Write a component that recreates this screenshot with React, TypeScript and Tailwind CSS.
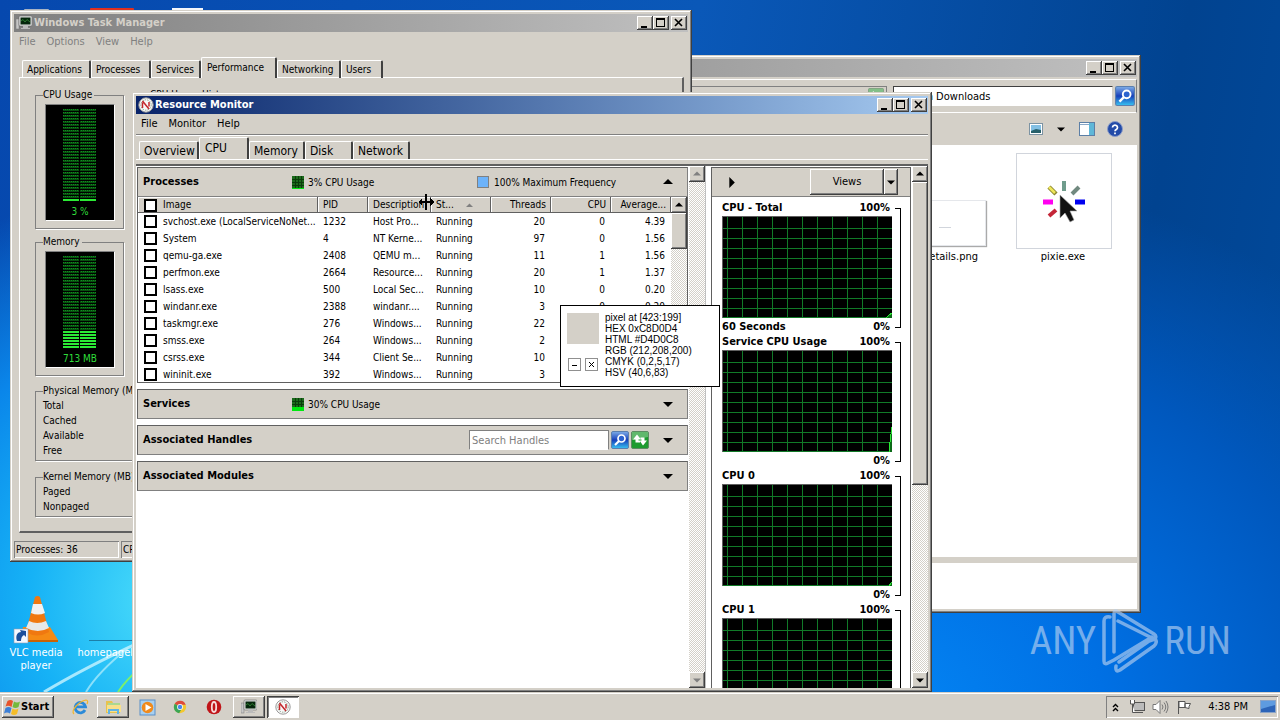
import React from "react";

const raised =
    "bg-[#d4d0c8] shadow-[inset_-1px_-1px_#404040,inset_1px_1px_#fff,inset_-2px_-2px_#808080]";
const windowFrame =
    "bg-[#d4d0c8] shadow-[inset_-1px_-1px_#404040,inset_1px_1px_#d4d0c8,inset_-2px_-2px_#808080,inset_2px_2px_#fff]";
const hatch =
    "bg-[repeating-conic-gradient(#fff_0_25%,#d4d0c8_0_50%)] bg-[length:2px_2px]";

const processes = [
    ["svchost.exe (LocalServiceNoNet...", "1232", "Host Pro...", "20", "0", "4.39"],
    ["System", "4", "NT Kerne...", "97", "0", "1.56"],
    ["qemu-ga.exe", "2408", "QEMU m...", "11", "1", "1.56"],
    ["perfmon.exe", "2664", "Resource...", "20", "1", "1.37"],
    ["lsass.exe", "500", "Local Sec...", "10", "0", "0.20"],
    ["windanr.exe", "2388", "windanr....", "3", "0", "0.20"],
    ["taskmgr.exe", "276", "Windows...", "22"],
    ["smss.exe", "264", "Windows...", "2"],
    ["csrss.exe", "344", "Client Se...", "10"],
    ["wininit.exe", "392", "Windows...", "3"],
];

type Direction = "up" | "down" | "right";

const Arrow: React.FC<{ dir: Direction; size?: number; color?: string }> = ({
    dir,
    size = 9,
    color = "#000",
}) => {
    const paths = {
        up: "M5 2L10 7H0z",
        down: "M0 3H10L5 8z",
        right: "M3 0V10L8 5z",
    };
    return (
        <svg width={size} height={size} viewBox="0 0 10 10">
            <path d={paths[dir]} fill={color} />
        </svg>
    );
};

const CaptionButtons: React.FC = () => (
    <div className="flex ml-auto mr-px">
        <button aria-label="Minimize" className={`w-4 h-3.5 ${raised}`}>
            <svg width="16" height="14">
                <rect x="4" y="10" width="6" height="2" />
            </svg>
        </button>
        <button aria-label="Maximize" className={`w-4 h-3.5 ${raised}`}>
            <svg width="16" height="14" shapeRendering="crispEdges">
                <path d="M3 2h9v9H3zM4 4v6h7V4z" fillRule="evenodd" />
            </svg>
        </button>
        <button aria-label="Close" className={`w-4 h-3.5 ml-0.5 ${raised}`}>
            <svg width="16" height="14">
                <path d="M4 3l7 7M11 3l-7 7" stroke="#000" strokeWidth="1.6" />
            </svg>
        </button>
    </div>
);

const MonitorIcon: React.FC = () => (
    <svg width="16" height="16" viewBox="0 0 16 16">
        <rect x="0" y="4" width="3" height="10" fill="#c8c8c8" stroke="#777" strokeWidth=".5" />
        <rect x="3" y="1" width="13" height="10" rx="1" fill="#e4e4e4" stroke="#666" strokeWidth=".6" />
        <rect x="4.500" y="2.500" width="10" height="7" fill="#05260c" />
        <path d="M5 6l2-1.500 2 2.500 2-2.500 3 2.500" fill="none" stroke="#2c7a30" />
        <path d="M7 11h5v2h2v1H5v-1h2z" fill="#bbb" />
    </svg>
);

const GaugeIcon: React.FC = () => (
    <svg width="16" height="16" viewBox="0 0 16 16">
        <circle cx="8" cy="8" r="7.2" fill="#f8f8f8" stroke="#999" />
        <circle cx="8" cy="8" r="5.2" fill="none" stroke="#8ba38e" strokeDasharray="1.5 1" />
        <path d="M4.500 11V5.500M4.500 4l6.500 8M11 5v4.500" stroke="#c3272b" strokeWidth="1.500" />
    </svg>
);

const Magnifier: React.FC = () => (
    <svg width="100%" height="100%" viewBox="0 0 18 18">
        <defs>
            <linearGradient id="lens" x2="0" y2="1">
                <stop offset="0" stopColor="#7faee8" />
                <stop offset=".5" stopColor="#173fba" />
                <stop offset="1" stopColor="#38c3f2" />
            </linearGradient>
        </defs>
        <rect x=".5" y=".5" width="17" height="17" rx="1.5" fill="url(#lens)" stroke="#5b7fae" />
        <circle cx="10.500" cy="7.500" r="3.500" fill="#2c63cf" stroke="#fff" strokeWidth="1.700" />
        <path d="M8 10l-4 4" stroke="#fff" strokeWidth="2.200" />
    </svg>
);

const RefreshIcon: React.FC = () => (
    <svg width="100%" height="100%" viewBox="0 0 18 18">
        <rect x=".5" y=".5" width="17" height="17" rx="1.5" fill="#1d9b2f" stroke="#5d8c63" />
        <path d="M1 1h16v5L1 9z" fill="#fff" opacity=".3" />
        <path d="M6 3.500L2 8.500H4.500V11.500H9V9.500H7.500V8.500H10zM12 14.500l4-5H13.500V6.500H9.500V8.500H10.500V9.500H8.500z" fill="#fff" />
    </svg>
);

const TabStrip: React.FC<{
    tabs: { name: string; width: string }[];
    active: string;
    className: string;
}> = ({ tabs, active, className }) => (
    <div role="tablist" className={`flex items-end ${className}`}>
        {tabs.map((tab) => (
            <button
                key={tab.name}
                role="tab"
                aria-selected={tab.name === active}
                className={`${tab.width} text-left border-l border-t border-l-white border-t-white border-r-[#404040] whitespace-nowrap rounded-t-xs ${
                    tab.name === active
                        ? "h-full pl-[5px] pb-0.5 border-r-2 relative bg-[#d4d0c8]"
                        : "h-[18px] pl-1 border-r-2"
                }`}
            >
                {tab.name}
            </button>
        ))}
    </div>
);

const Meter: React.FC<{ level: number; label: string }> = ({ level, label }) => (
    <div className="w-[70px] h-[117px] bg-black border border-t-[#808080] border-l-[#808080] border-r-white border-b-white flex flex-col items-center text-[#2fdc3a] text-[10px] leading-4">
        <svg width="34" height="95" className="mt-1" shapeRendering="crispEdges">
            <defs>
                <pattern id="leds" width="2" height="3" patternUnits="userSpaceOnUse">
                    <rect width="2" height="2" fill="#06500e" />
                    <rect width="1" height="1" fill="#128a20" />
                </pattern>
            </defs>
            <rect width="33" height="91" fill="url(#leds)" />
            {Array.from({ length: level }, (_, i) => (
                <rect key={i} y={90 - i * 3} width="33" height="2" fill="#2bea35" />
            ))}
            <rect x="16" width="1" height="95" fill="#000" />
        </svg>
        {label}
    </div>
);

const Group: React.FC<{
    title?: string;
    className: string;
    children?: React.ReactNode;
}> = ({ title, className, children }) => (
    <fieldset
        className={`border border-[#808080] shadow-[1px_1px_#fff] pl-[7px] leading-[15px] ${className}`}
    >
        {title && <legend className="leading-[14px] pr-0.5 whitespace-nowrap">{title}</legend>}
        {children}
    </fieldset>
);

const TaskManager: React.FC = () => (
    <section
        className={`absolute left-[10px] top-[10px] w-[682px] h-[552px] p-1 flex flex-col text-[10px] ${windowFrame}`}
    >
        <div className="h-[18px] shrink-0 flex items-center pl-0.5 gap-0.5 bg-linear-to-r from-[#808080] to-[#c0c0c0]">
            <MonitorIcon />
            <h2 className="font-bold text-[11px] text-[#d4d0c8]">Windows Task Manager</h2>
            <CaptionButtons />
        </div>
        <nav className="h-5 shrink-0 flex items-center gap-[11px] pl-[5px] text-[11px] text-[#808080]">
            <button>File</button>
            <button>Options</button>
            <button>View</button>
            <button>Help</button>
        </nav>
        <TabStrip
            className="h-[21px] mt-[5px] -mb-px ml-2 text-[10px] z-10"
            active="Performance"
            tabs={[
                { name: "Applications", width: "w-[69px]" },
                { name: "Processes", width: "w-[60px]" },
                { name: "Services", width: "w-[50px]" },
                { name: "Performance", width: "w-[76px]" },
                { name: "Networking", width: "w-[64px]" },
                { name: "Users", width: "w-[42px]" },
            ]}
        />
        <div className="flex-1 ml-[5px] mr-1 mb-2 pt-2.5 pl-[15px] pr-4 border-t border-l border-white border-r-2 border-b-2 border-r-[#606060] border-b-[#606060]">
            <div className="flex gap-[18px]">
                <Group title="CPU Usage" className="w-[89px] h-[141px]">
                    <div className="pl-0.5 pt-0.5">
                        <Meter level={1} label="3 %" />
                    </div>
                </Group>
                <Group title="CPU Usage History" className="flex-1 h-[141px]" />
            </div>
            <div className="flex gap-[18px] mt-1.5">
                <Group title="Memory" className="w-[89px] h-[141px]">
                    <div className="pl-0.5 pt-0.5">
                        <Meter level={6} label="713 MB" />
                    </div>
                </Group>
                <Group className="flex-1 mt-[7px]" />
            </div>
            <Group title="Physical Memory (MB)" className="w-[200px] h-[77px] mt-2">
                <p>Total</p>
                <p>Cached</p>
                <p>Available</p>
                <p>Free</p>
            </Group>
            <Group title="Kernel Memory (MB)" className="w-[200px] h-[47px] mt-[9px]">
                <p>Paged</p>
                <p>Nonpaged</p>
            </Group>
        </div>
        <footer className="h-[17px] shrink-0 flex gap-0.5 leading-[18px]">
            <p className="w-[105px] pl-0.5 shadow-[inset_1px_1px_#808080,inset_-1px_-1px_#fff]">
                Processes: 36
            </p>
            <p className="w-[120px] pl-0.5 shadow-[inset_1px_1px_#808080,inset_-1px_-1px_#fff]">
                CPU Usage: 3%
            </p>
        </footer>
    </section>
);

const PixieIcon: React.FC = () => (
    <svg width="48" height="48" viewBox="0 0 48 48">
        <path d="M24 4v10" stroke="#6f9c8c" strokeWidth="4" />
        <path d="M9 10l7 7" stroke="#8a8430" strokeWidth="4.500" />
        <path d="M9 10l6 6" stroke="#eee65a" strokeWidth="2.500" />
        <path d="M39 10l-7 7" stroke="#71897f" strokeWidth="4" />
        <path d="M3 25h10" stroke="#ff00f0" strokeWidth="5" />
        <path d="M35 25h10" stroke="#0000f0" strokeWidth="5" />
        <path d="M9 39l7-6" stroke="#c42638" strokeWidth="4" />
        <path d="M20 18v23l5-5 5 9 4-2-4-9h7z" fill="#111" stroke="#aaa" strokeWidth=".6" />
    </svg>
);

const Explorer: React.FC = () => (
    <section
        className={`absolute left-[240px] top-[55px] w-[901px] h-[558px] p-1 flex flex-col text-[11px] ${windowFrame}`}
    >
        <div className="h-[18px] shrink-0 flex items-center bg-linear-to-r from-[#808080] to-[#c0c0c0]">
            <CaptionButtons />
        </div>
        <div className="mt-0.5 h-[34px] shrink-0 flex items-center gap-1.5 pr-px border border-t-white border-b-white border-l-[#d4d0c8] border-r-[#808080]">
            <div className="flex-1 h-[21px] flex justify-end items-center border border-[#808080] border-b-white">
                <button aria-label="Refresh" className="w-5 h-4 opacity-70">
                    <RefreshIcon />
                </button>
            </div>
            <div className="flex items-center gap-0.5">
                <input
                    aria-label="Search"
                    placeholder="Search Downloads"
                    className="w-[220px] h-[21px] pl-[5px] bg-white border border-t-[#404040] border-l-[#404040] border-[#d4d0c8] placeholder:text-black"
                />
                <button aria-label="Go" className="w-5 h-5">
                    <Magnifier />
                </button>
            </div>
        </div>
        <div className="h-8 shrink-0 flex items-center justify-end pr-3.5">
            <button aria-label="Change your view">
                <svg width="14" height="12">
                    <rect x=".5" y=".5" width="13" height="11" fill="#fff" stroke="#7c93a3" />
                    <rect x="2" y="2" width="10" height="8" fill="#83c0e4" />
                    <path d="M2 8l5-2 5 1v3H2z" fill="#27606a" />
                </svg>
            </button>
            <button aria-label="More options" className="ml-3.5">
                <Arrow dir="down" size={8} />
            </button>
            <button aria-label="Preview pane" className="ml-3.5">
                <svg width="16" height="14">
                    <rect x=".5" y=".5" width="15" height="13" fill="#fff" stroke="#5c7fa6" />
                    <path d="M1 2.500h9" stroke="#89a8c8" />
                    <rect x="10" y="1" width="5" height="12" fill="#5fb7d8" />
                </svg>
            </button>
            <button aria-label="Help" className="ml-3">
                <svg width="16" height="16">
                    <circle cx="8" cy="8" r="7.500" fill="#234ba8" stroke="#8b9cc8" />
                    <path d="M5.500 6.500a2.500 2.300 0 1 1 3.800 2c-1 .6-1.300.8-1.300 1.700M8 11.500v1.700" fill="none" stroke="#fff" strokeWidth="1.700" />
                </svg>
            </button>
        </div>
        <div className="flex-1 bg-white flex justify-end items-start gap-[30px] pt-2 pr-[25px]">
            <figure className="w-24">
                <div className="h-24 flex items-end pb-[3px]">
                    <div className="w-full h-[46px] bg-white border border-gray-200 shadow-[1px_1px_1px_#aaa] flex items-center pl-12">
                        <div className="w-3 h-px mt-2 bg-gray-300" />
                    </div>
                </div>
                <figcaption className="leading-4 pr-2 text-right">details.png</figcaption>
            </figure>
            <figure className="w-24 text-center">
                <div className="h-24 border border-gray-300 flex items-center justify-center">
                    <PixieIcon />
                </div>
                <figcaption className="leading-4 pr-0.5">pixie.exe</figcaption>
            </figure>
        </div>
        <div className="h-[46px] shrink-0 mt-1.5 bg-white" />
    </section>
);

const SectionHeader: React.FC<{
    title: string;
    open?: boolean;
    children?: React.ReactNode;
}> = ({ title, open, children }) => (
    <header className="h-[30px] flex items-center pl-[5px] pr-3.5 bg-[#d4d0c8] border border-[#808080] border-t-[#606060] border-l-[#606060] text-[10px]">
        <h3 className="w-[149px] shrink-0 font-bold text-[11px] whitespace-nowrap">{title}</h3>
        <div className="flex-1 flex items-center">{children}</div>
        <button aria-label={`Toggle ${title}`}>
            <Arrow dir={open ? "up" : "down"} size={10} />
        </button>
    </header>
);

const ProcessTable: React.FC = () => {
    const head =
        "font-normal p-0 px-[5px] bg-[#d4d0c8] shadow-[inset_-1px_-1px_#606060,inset_1px_1px_#fff]";
    const box = "appearance-none size-[13px] shrink-0 border-2 border-black bg-white";
    return (
        <table className="table-fixed w-[533px] text-[10px] leading-4 text-left whitespace-nowrap">
            <thead>
                <tr className="h-4">
                    <th className={`w-[180px] ${head}`}>
                        <label className="flex items-center gap-1.5 pl-px">
                            <input type="checkbox" className={box} />
                            Image
                        </label>
                    </th>
                    <th className={`w-[50px] ${head}`}>PID</th>
                    <th className={`w-[63px] ${head}`}>Description</th>
                    <th className={`w-[60px] ${head}`}>
                        <span className="flex items-center gap-3">
                            St... <Arrow dir="up" size={7} color="#808080" />
                        </span>
                    </th>
                    <th className={`w-[60px] text-right ${head}`}>Threads</th>
                    <th className={`w-[60px] text-right ${head}`}>CPU</th>
                    <th className={`w-[60px] text-right ${head}`}>Average...</th>
                </tr>
            </thead>
            <tbody>
                {processes.map(([name, pid, description, threads, cpu, average]) => (
                    <tr key={pid} className="h-[17px]">
                        <td className="p-0 px-[5px]">
                            <label className="flex items-center gap-1.5 pl-px">
                                <input type="checkbox" className={box} />
                                {name}
                            </label>
                        </td>
                        <td className="p-0 px-[5px]">{pid}</td>
                        <td className="p-0 px-[5px]">{description}</td>
                        <td className="p-0 px-[5px]">Running</td>
                        <td className="p-0 px-1.5 text-right">{threads}</td>
                        <td className="p-0 px-1.5 text-right">{cpu}</td>
                        <td className="p-0 px-1.5 text-right">{average}</td>
                    </tr>
                ))}
            </tbody>
        </table>
    );
};

const ScrollButton: React.FC<{ dir: Direction; disabled?: boolean }> = ({ dir, disabled }) => (
    <button
        disabled={disabled}
        aria-label={`Scroll ${dir}`}
        className={`w-4 h-4 shrink-0 flex items-center justify-center ${raised}`}
    >
        <Arrow dir={dir} size={8} color={disabled ? "#808080" : "#000"} />
    </button>
);

const UsageIcon: React.FC<{ fill: number }> = ({ fill }) => (
    <svg width="12" height="13" shapeRendering="crispEdges" className="mr-1">
        <rect width="12" height="13" fill="#1c6b1c" />
        <path d="M3.500 0v13M6.500 0v13M9.500 0v13M0 3.500h12M0 6.500h12M0 9.500h12" stroke="#0a3d0a" />
        <rect y={13 - fill} width="12" height={fill} fill="#00e810" />
    </svg>
);

const Chart: React.FC<{ title: string; left?: string; right?: string; line?: string }> = ({
    title,
    left,
    right,
    line,
}) => (
    <figure className="flex h-[134px] shrink-0 gap-[3px] font-bold text-[11px] leading-4">
        <div className="w-[170px]">
            <figcaption className="flex justify-between pr-0.5">
                <span>{title}</span>
                <span>100%</span>
            </figcaption>
            <svg width="170" height="102" shapeRendering="crispEdges" className="block">
                <rect width="170" height="102" />
                {Array.from({ length: 11 }, (_, i) => (
                    <path key={i} d={`M${5.5 + i * 15} 0V102`} stroke="#117a28" />
                ))}
                {Array.from({ length: 9 }, (_, i) => (
                    <path key={i} d={`M0 ${12.5 + i * 10}H170`} stroke="#117a28" />
                ))}
                <path d="M0 101.500H170" stroke="#117a28" />
                <path d="M0 .5H170M.5 0V102" stroke="#606060" />
                {line && <path d={line} fill="#0c6b18" stroke="#2bea35" />}
            </svg>
            <p className="flex justify-between pr-0.5 pt-px">
                <span>{left}</span>
                <span>{right}</span>
            </p>
        </div>
        <div className="w-1.5 h-[120px] mt-2 border border-l-0 border-black" />
    </figure>
);

const ResourceMonitor: React.FC = () => (
    <section
        className={`absolute left-[132px] top-[92px] w-[800px] h-[600px] p-1 flex flex-col text-[11px] ${windowFrame}`}
    >
        <div className="h-[18px] shrink-0 flex items-center pl-0.5 gap-px bg-linear-to-r from-[#0a246a] to-[#a6caf0]">
            <GaugeIcon />
            <h2 className="font-bold text-white">Resource Monitor</h2>
            <CaptionButtons />
        </div>
        <nav className="h-[21px] shrink-0 flex items-center gap-[11px] pl-[5px] border-b border-[#808080] shadow-[0_1px_#fff]">
            <button>File</button>
            <button>Monitor</button>
            <button>Help</button>
        </nav>
        <TabStrip
            className="h-[22px] mt-0.5 ml-[3px] text-[12px] leading-[18px]"
            active="CPU"
            tabs={[
                { name: "Overview", width: "w-[60px]" },
                { name: "CPU", width: "w-[50px]" },
                { name: "Memory", width: "w-[56px]" },
                { name: "Disk", width: "w-[48px]" },
                { name: "Network", width: "w-[57px]" },
            ]}
        />
        <div className="h-[7px] shrink-0 border-t border-t-white border-b-2 border-b-[#606060]" />
        <div className="flex-1 min-h-0 flex bg-white">
            <div className="flex-1 flex flex-col gap-1.5 px-px pt-px">
                <div>
                    <SectionHeader title="Processes" open>
                        <p className="w-[185px] flex items-center">
                            <UsageIcon fill={1} />
                            3% CPU Usage
                        </p>
                        <p className="flex items-center gap-[5px]">
                            <span className="size-3 bg-[#6db3fa] border border-[#808080]" />
                            100% Maximum Frequency
                        </p>
                    </SectionHeader>
                    <div className="h-[186px] overflow-hidden flex items-start border border-t-0 border-[#606060]">
                        <ProcessTable />
                        <div className={`w-4 h-full flex flex-col ${hatch}`}>
                            <ScrollButton dir="up" />
                            <div className={`h-9 ${raised}`} />
                        </div>
                    </div>
                </div>
                <SectionHeader title="Services">
                    <UsageIcon fill={4} />
                    30% CPU Usage
                </SectionHeader>
                <SectionHeader title="Associated Handles">
                    <div className="flex items-center gap-0.5 ml-auto mr-3.5">
                        <input
                            aria-label="Search Handles"
                            placeholder="Search Handles"
                            className="w-[140px] h-5 pl-0.5 bg-white border border-[#808080] border-b-white text-[11px] placeholder:text-[#808080]"
                        />
                        <button aria-label="Search" className="size-[18px]">
                            <Magnifier />
                        </button>
                        <button aria-label="Refresh" className="size-[18px]">
                            <RefreshIcon />
                        </button>
                    </div>
                </SectionHeader>
                <SectionHeader title="Associated Modules" />
            </div>
            <div className={`w-4 flex flex-col justify-between ${hatch}`}>
                <ScrollButton dir="up" disabled />
                <ScrollButton dir="down" disabled />
            </div>
            <div className="w-1.5 border-l border-[#c0c0c0]" />
            <div className="w-[200px] mt-px flex flex-col overflow-hidden border-x border-t border-[#606060]">
                <div className="h-[29px] shrink-0 flex items-center justify-between pl-3.5 pr-3 bg-[#d4d0c8] border-b border-[#808080]">
                    <button aria-label="Collapse charts">
                        <Arrow dir="right" size={11} />
                    </button>
                    <div className="flex h-[26px]">
                        <button className={`w-[74px] ${raised}`}>Views</button>
                        <button
                            aria-label="Choose view"
                            className={`w-[14px] flex items-center justify-center ${raised}`}
                        >
                            <Arrow dir="down" size={8} />
                        </button>
                    </div>
                </div>
                <div className="flex flex-col pt-[3px] pl-2.5">
                    <Chart title="CPU - Total" left="60 Seconds" right="0%" line="M164 102l3-3 3-2v5z" />
                    <Chart title="Service CPU Usage" right="0%" line="M167 102l1-10 2-15v25z" />
                    <Chart title="CPU 0" right="0%" line="M167 102l3-4v4z" />
                    <Chart title="CPU 1" />
                </div>
            </div>
            <div className={`w-4 ml-px flex flex-col ${hatch}`}>
                <ScrollButton dir="up" />
                <div className={`h-[303px] ${raised}`} />
                <div className="mt-auto">
                    <ScrollButton dir="down" />
                </div>
            </div>
        </div>
    </section>
);

const PixelInfo: React.FC = () => {
    const box =
        "size-[13px] flex items-center justify-center bg-white border border-[#909090] leading-none";
    return (
        <aside className="absolute left-[560px] top-[305px] w-[160px] h-[82px] p-1.5 flex gap-1.5 bg-white border border-black text-[10px] leading-[11px] font-['Liberation_Sans',sans-serif]">
            <div className="w-8 flex flex-col">
                <div className="h-[31px] mt-px bg-[#d4d0c8]" />
                <div className="flex justify-between mt-3.5 px-px">
                    <button aria-label="Collapse" className={box}>
                        <svg width="7" height="7">
                            <path d="M1 4.500h5" stroke="#000" />
                        </svg>
                    </button>
                    <button aria-label="Close" className={box}>
                        <svg width="7" height="7">
                            <path d="M1 1l5 5M6 1l-5 5" stroke="#000" />
                        </svg>
                    </button>
                </div>
            </div>
            <div className="whitespace-nowrap">
                <p>pixel at [423:199]</p>
                <p>HEX 0xC8D0D4</p>
                <p>HTML #D4D0C8</p>
                <p>RGB (212,208,200)</p>
                <p>CMYK (0,2,5,17)</p>
                <p>HSV (40,6,83)</p>
            </div>
        </aside>
    );
};

const Wallpaper: React.FC = () => (
    <>
        <div className="absolute inset-0 bg-[radial-gradient(ellipse_400px_420px_at_170px_600px,#4fe0fa_0%,#16b2f6_35%,#0a86ea_65%,#0a60d000_100%),radial-gradient(ellipse_700px_560px_at_860px_720px,#0488f6_0%,#0070e4_35%,#0058be_70%,#00489a00_100%),linear-gradient(100deg,#0648ae_0%,#0a58b8_50%,#014390_85%,#014a9c_100%)]" />
        <svg className="absolute left-0 bottom-0" width="140" height="100">
            <path d="M44 100Q84 76 140 50" fill="none" stroke="#c8f4ff" strokeWidth="3" opacity=".8" />
            <path d="M86 100Q98 80 128 56" fill="none" stroke="#b8f0fc" strokeWidth="2" opacity=".7" />
            <path d="M118 100Q126 88 140 76" fill="none" stroke="#7cf06c" strokeWidth="2" />
        </svg>
        <svg className="absolute left-0 top-0" width="210" height="12">
            <rect x="24" y="9" width="25" height="3" rx="1" fill="#a9b4c4" />
            <rect x="90" y="8" width="44" height="4" rx="1" fill="#e0301e" />
            <rect x="172" y="8" width="31" height="4" fill="#f4f6fa" />
        </svg>
    </>
);

const VlcIcon: React.FC = () => (
    <svg width="46" height="50" viewBox="0 0 46 50">
        <path d="M10 33h27l8 13H8z" fill="#f58a14" />
        <path d="M8 46h37v2H8z" fill="#c96204" />
        <path d="M22 3q2.500-2 5 0l9 35q-12 7-23 0z" fill="#f07810" />
        <path d="M20 10h9l3 9q-7 3-14 0z" fill="#f2f2f2" />
        <path d="M16 27q8 4 17 0l3 7q-11 6-23 0z" fill="#e8e8e8" />
        <rect x="1" y="35" width="14" height="14" fill="#f4f8ff" stroke="#8a9cb4" strokeWidth=".6" />
        <path d="M4 47c-2-6 1-9 4-9l-1-2 6 1v6l-2-2c-2 1-3 3-3 6z" fill="#1b4f9c" />
    </svg>
);

const DesktopIcons: React.FC = () => (
    <div className="absolute left-0 top-[594px] flex text-white text-[11px] leading-[13px] text-center">
        <a href="#vlc" className="w-[72px] flex flex-col items-center">
            <VlcIcon />
            <span className="mt-0.5">
                VLC media
                <br />
                player
            </span>
        </a>
        <a href="#homepage" className="flex flex-col pl-[5px]">
            <span className="h-[52px] flex items-center ml-3 pt-10">
                <span className="w-12 h-px bg-[#1c7fa8]" />
            </span>
            homepageb
        </a>
    </div>
);

const AnyRunLogo: React.FC = () => (
    <div className="absolute right-[49px] top-[608px] flex items-center gap-1.5 text-[#b4cff0] opacity-65 text-[39px] leading-none">
        <span className="font-['Roboto_Condensed','Liberation_Sans_Narrow','Liberation_Sans',sans-serif]">
            ANY
        </span>
        <svg width="56" height="66" viewBox="0 0 56 66" fill="none" stroke="currentColor" strokeWidth="3.500" strokeLinejoin="round" strokeLinecap="round">
            <path d="M8 9q-6-1-6 4v40q0 4 4 2l6-3L50 29" />
            <path d="M12 44V6q0-5 4-2l36 22q3 2 1 5l-3-1L16 13" />
            <path d="M14 58q-1 7 4 4l34-24q4-4 1-7l-6 2-30 21" />
        </svg>
        <span className="font-['Roboto_Condensed','Liberation_Sans_Narrow','Liberation_Sans',sans-serif]">
            RUN
        </span>
    </div>
);

const ResizeCursor: React.FC = () => (
    <svg className="absolute left-[417px] top-[194px]" width="18" height="17" shapeRendering="crispEdges">
        <rect x="8" y="0" width="2" height="16" />
        <rect x="2" y="7" width="14" height="2" />
        <path d="M1 8l4-4v8zM17 8l-4-4v8z" />
    </svg>
);

const Taskbar: React.FC = () => (
    <footer className="h-7 shrink-0 relative flex items-center pl-0.5 pt-1 pb-0.5 pr-0.5 bg-[#d4d0c8] shadow-[inset_0_1px_#d4d0c8,inset_0_2px_#fff] text-[11px]">
        <button className={`w-[52px] h-[22px] flex items-center pl-0.5 font-bold ${raised}`}>
            <svg width="17" height="16" viewBox="0 0 16 16">
                <path d="M3 2q3-2 5.500 0L7 8Q4 6 1 7.500z" fill="#e8532a" />
                <path d="M9.500 2.500q3 2 6 0L14 8q-3 2-6 0z" fill="#74b93c" />
                <path d="M1 9q3-2 6 0l-1.500 5.500q-3-2-6 0z" fill="#3c7fd6" />
                <path d="M8 9.500q3 2 6 0L12.500 15q-3 2-6 0z" fill="#f5bd28" />
            </svg>
            Start
        </button>
        <button aria-label="Internet Explorer" className="w-8 ml-2.5 flex justify-center">
            <svg width="18" height="18" viewBox="0 0 18 18">
                <path d="M14 12a5.200 5.200 0 1 1 .5-3.200H5" fill="none" stroke="#2b8ad8" strokeWidth="2.800" />
                <path d="M3 16C-1 13 8 3 15 2c2 0 2 2 1 4" fill="none" stroke="#f1b52c" strokeWidth="1.200" />
            </svg>
        </button>
        <button
            aria-label="Windows Explorer"
            className={`w-8 h-[22px] ml-px flex items-center justify-center ${raised}`}
        >
            <svg width="17" height="16" viewBox="0 0 17 16">
                <path d="M1 2h6l1 2h7v10H1z" fill="#e8c34d" />
                <path d="M3 4h12v3H3z" fill="#aad890" />
                <path d="M2 6h14v7H2z" fill="#f8e08a" />
                <path d="M3 15v-5h11v5h-2v-3H5v3z" fill="#62b4e4" />
            </svg>
        </button>
        <button aria-label="Media Player" className="w-9 flex justify-center">
            <svg width="17" height="17" viewBox="0 0 17 17">
                <rect x="1" y="1" width="15" height="15" fill="#a8d0f0" stroke="#5a8fc8" />
                <circle cx="8.500" cy="8.500" r="5.800" fill="#f08a1c" />
                <path d="M6.500 5v7l6-3.500z" fill="#fff" />
            </svg>
        </button>
        <button aria-label="Chrome" className="w-[30px] flex justify-center">
            <svg width="14" height="14" viewBox="0 0 16 16">
                <circle cx="8" cy="8" r="7" fill="#f3c82e" />
                <path d="M8 8L2 4.400A7 7 0 0 1 14.500 5.300H8z" fill="#de4a3c" />
                <path d="M8 8L2 4.400A7 7 0 0 0 7 15l3-5z" fill="#3ba556" />
                <circle cx="8" cy="8" r="3.300" fill="#fff" />
                <circle cx="8" cy="8" r="2.500" fill="#4a87ea" />
            </svg>
        </button>
        <button aria-label="Opera" className="w-[38px] flex justify-center">
            <svg width="16" height="16" viewBox="0 0 16 16">
                <circle cx="8" cy="8" r="7.300" fill="#c01418" />
                <ellipse cx="8" cy="8" rx="2.200" ry="5" fill="#c01418" stroke="#f6dada" strokeWidth="1.800" />
            </svg>
        </button>
        <button
            aria-label="Windows Task Manager"
            className={`w-8 h-[22px] flex items-center justify-center ${raised}`}
        >
            <MonitorIcon />
        </button>
        <button
            aria-label="Resource Monitor"
            className="w-8 h-[22px] ml-0.5 flex items-center justify-center bg-white shadow-[inset_1px_1px_#404040,inset_-1px_-1px_#fff,inset_2px_2px_#808080]"
        >
            <GaugeIcon />
        </button>
        <div className="ml-auto h-[22px] flex items-center pl-1.5 pr-0.5 shadow-[inset_1px_1px_#808080,inset_-1px_-1px_#fff]">
            <button aria-label="Show hidden icons">
                <svg width="7" height="9">
                    <path d="M1 4l2.500-2.500L6 4M1 8l2.500-2.500L6 8" fill="none" stroke="#000" strokeWidth="1.400" />
                </svg>
            </button>
            <svg width="16" height="16" viewBox="0 0 16 16" className="ml-2.5" fill="#fff" stroke="#555">
                <rect x="4.500" y="3.500" width="11" height="8" fill="#bbb" />
                <path d="M6 13.500h8M1.500 1v4h4V1M3.500 5v8.500H6" />
            </svg>
            <svg width="17" height="16" viewBox="0 0 17 16" className="ml-[7px]" fill="none" stroke="#777">
                <path d="M1 5.500h3l4-4v13l-4-4H1z" fill="#fff" />
                <path d="M10 5.500q2 2.500 0 5M12 3.500q3.500 4.500 0 9M14 2q4 6 0 12" />
            </svg>
            <svg width="16" height="16" viewBox="0 0 16 16" className="ml-[7px]" fill="#fff" stroke="#555">
                <path d="M2.500 15V2M3 2.500h6v6H3zM9 4.500h5.500l-1.500 3 0 2-4-1z" />
            </svg>
            <time className="ml-4 mr-3 whitespace-nowrap">4:38 PM</time>
            <button aria-label="Show desktop">
                <svg width="16" height="14" viewBox="0 0 16 14">
                    <rect x=".5" y=".5" width="15" height="12" fill="#2c64b8" stroke="#8aa4c8" />
                    <path d="M1 1h14v4L1 9z" fill="#5e9be0" />
                </svg>
            </button>
        </div>
    </footer>
);

const App: React.FC = () => {
    return (
        <div className="w-full h-screen flex flex-col overflow-hidden font-['DejaVu_Sans_Condensed','Liberation_Sans',sans-serif] text-black">
            <main className="flex-1 relative overflow-hidden">
                <Wallpaper />
                <DesktopIcons />
                <Explorer />
                <TaskManager />
                <ResourceMonitor />
                <PixelInfo />
                <ResizeCursor />
                <AnyRunLogo />
            </main>
            <Taskbar />
        </div>
    );
};

export default App;
